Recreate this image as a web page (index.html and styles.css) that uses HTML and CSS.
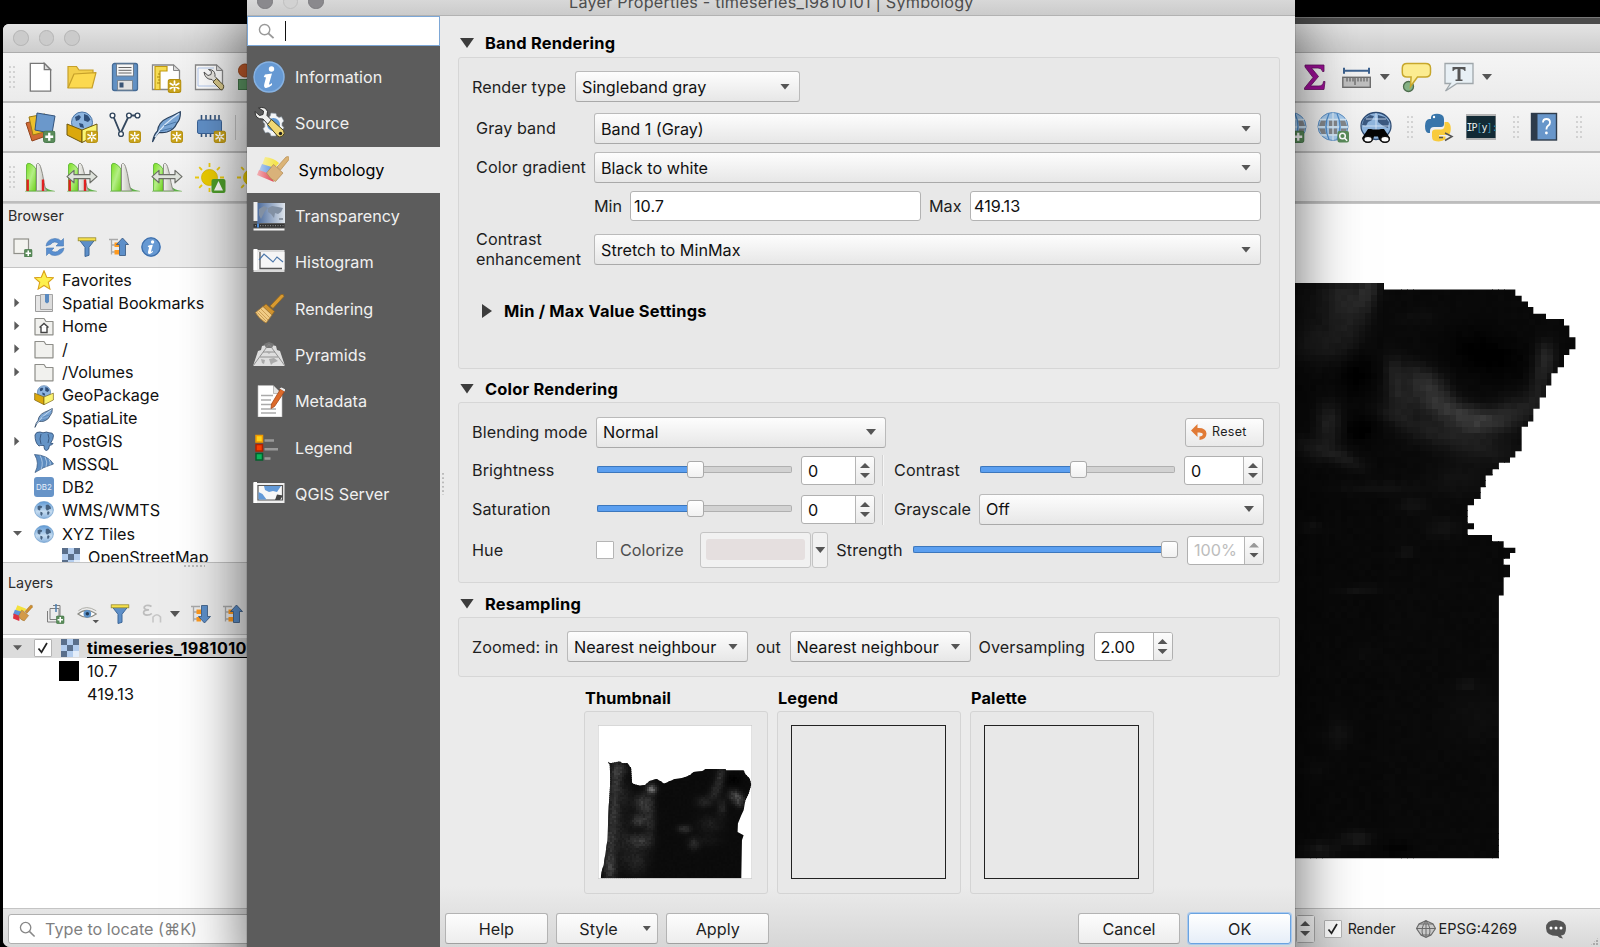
FILE: index.html
```html
<!DOCTYPE html>
<html lang="en">
<head>
<meta charset="utf-8">
<title>Layer Properties</title>
<link rel="stylesheet" href="styles.css">
</head>
<body>
<svg class="defs" width="0" height="0">
  <defs>
    <linearGradient id="gGreen" x1="0" y1="0" x2="1" y2="1"><stop offset="0" stop-color="#7be01e"/><stop offset=".5" stop-color="#b4ee86"/><stop offset="1" stop-color="#6fd018"/></linearGradient>
    <linearGradient id="gGray" x1="0" y1="0" x2="1" y2="0"><stop offset="0" stop-color="#f2f2ee"/><stop offset="1" stop-color="#b9b9b2"/></linearGradient>
    <linearGradient id="gGlobe" x1="0" y1="0" x2="0" y2="1"><stop offset="0" stop-color="#5f9ad6"/><stop offset=".6" stop-color="#c4dbf0"/><stop offset="1" stop-color="#8ab2dc"/></linearGradient>
    <linearGradient id="gYellow" x1="0" y1="0" x2="1" y2="0"><stop offset="0" stop-color="#f7ef9c"/><stop offset="1" stop-color="#f4e13c"/></linearGradient>
    <linearGradient id="gBlue" x1="0" y1="0" x2="1" y2="0"><stop offset="0" stop-color="#b4cdf0"/><stop offset="1" stop-color="#5b93dc"/></linearGradient>
    <linearGradient id="gRed" x1="0" y1="0" x2="1" y2="0"><stop offset="0" stop-color="#f2b0b4"/><stop offset="1" stop-color="#e24553"/></linearGradient>
    <symbol id="badge-new" viewBox="0 0 13 13"><rect x=".5" y=".5" width="12" height="12" rx="2.2" fill="#c9a41c" stroke="#b58f0e"/><path d="M6.5 2v9M2.6 4.2l7.8 4.6M2.6 8.800l7.8-4.600" stroke="#fff" stroke-width="1.6" stroke-linecap="round"/><circle cx="6.5" cy="6.5" r="1" fill="#c9a41c"/></symbol>
    <symbol id="badge-plus" viewBox="0 0 13 13"><rect x=".5" y=".5" width="12" height="12" rx="2.2" fill="#5a8c5a" stroke="#47774a"/><path d="M6.5 2.4v8.2M2.4 6.5h8.2" stroke="#fff" stroke-width="2.4"/></symbol>
    <symbol id="histo" viewBox="0 0 32 32"><path d="M2.500 30V4Q3 1.500 6 2.500 9.500 4 12 8v22z" fill="url(#gGreen)" stroke="#55b030" stroke-width=".8"/><path d="M20 25q3 4 10.500 5H19z" fill="#55b040"/><path d="M12.500 30V3.500q2-3 4 2 2 6 3.500 16 1 6 2.800 8.500z" fill="url(#gGray)" stroke="#8d8d86" stroke-width="1"/><path d="M1 30.300h30" stroke="#8fbf7a" stroke-width=".8"/></symbol>
    <symbol id="redbars" viewBox="0 0 32 32"><path d="M3.700 18.500V30M19 18.500V30" stroke="#e02020" stroke-width="2.400"/></symbol>
    <symbol id="dblarrow" viewBox="0 0 32 32"><path d="M1 15.600l7-6.200v4.200h16V9.400l7 6.200-7 6.200v-4.200H8v4.200z" fill="#dfe3dc" stroke="#6d6f69" stroke-width="1.200" stroke-linejoin="round"/></symbol>
    <symbol id="sun" viewBox="0 0 32 32"><circle cx="15.500" cy="16.500" r="8" fill="#f0cf00" stroke="#dbb900" stroke-width=".8"/><path d="M15.500 2v4M15.500 27v4M1 16.500h4M26 16.500h4M5.200 6.200l2.800 2.800M25.800 6.200L23 9M5.200 26.800L8 24" stroke="#efce10" stroke-width="1.800"/></symbol>
    <symbol id="globe" viewBox="0 0 22 20"><ellipse cx="11" cy="10" rx="10.300" ry="9.300" fill="url(#gGlobe)" stroke="#6b9ccb" stroke-width=".8"/><path d="M4 6l2.500-1 2.500.8-.6 2-1.600.6.300 1.500-1.300.7-1.800-1.300zM7 12l2 .6.600 1.500-1.300 2.500-1.300-1.600zM13 4.500l2.600-.6 2.700 2.400.3 2.500-2 .4-1 1-1.500.4-1.300-2zM14.500 12l2-.6.700 1.600-1.500 2.500-1.200-.6z" fill="#46617f"/></symbol>
    <symbol id="gridglobe" viewBox="0 0 32 32"><ellipse cx="16" cy="15.500" rx="15" ry="14" fill="#a9cdef" stroke="#5c8fc4"/><path d="M4 9.500h5l-1 5.500H2zM12 9.500h8v5.500h-8zM23 9.500h5l2 5.500h-6zM2 17.500h6l1 5.500H4.500zM12 17.500h8v5.500h-8zM24 17.500h6l-2 5.500h-5z" fill="#85888c"/><path d="M16 1.500v28M1 16h30M3 8.500h26M3 24h26" stroke="#d8eaf8" stroke-width="1.300"/><path d="M12 2.500q-6 13 0 26M20 2.500q6 13 0 26" stroke="#4f8dcb" stroke-width="1.300" fill="none"/></symbol>
    <symbol id="box" viewBox="0 0 32 32"><circle cx="16" cy="11.500" r="10.500" fill="#8db5e0" stroke="#4a74a5"/><path d="M9 6l4-2 2 2-2 3-3 1zM18 3l4 1.500 2.500 4-2.500 2.500-4-1.500zM13 12l4 1 1 4-4-1z" fill="#2f4f7a"/><path d="M1 13l15 6v12.500L1 24z" fill="#dba80c" stroke="#6d570c"/><path d="M31 13l-15 6v12.500L31 24z" fill="#fbf573" stroke="#6d570c"/></symbol>
    <symbol id="feather" viewBox="0 0 32 32"><path d="M1.500 31q1-7 5-11 1-9 10-13 6-2.500 12.800-6.200.5 7-3.300 11.200-3 7-10 9-4 1-8 .4Q4 25 1.500 31z" fill="#7aa5d4" stroke="#2c435f" stroke-width="1.200"/><path d="M4 26Q12 13 28 2.500" stroke="#dbe9f8" fill="none" stroke-width="1.200"/><path d="M9 20l12-3M13 15l12-4" stroke="#4b79aa" fill="none"/></symbol>
    <symbol id="folder" viewBox="0 0 20 20"><path d="M1 2.500h9l2 3h7v13.300H1z" fill="#f1f1ee" stroke="#8e8e89" stroke-width="1.200" stroke-linejoin="round"/></symbol>
    <symbol id="funnel" viewBox="0 0 20 20"><path d="M2 2.500h16l-6 7.800v8l-4 1.200v-9.200z" fill="#5d8fc9" stroke="#3d6798"/><rect x="1.200" y=".8" width="17.600" height="3" fill="#f6e04b" stroke="#988c2f" stroke-width=".8"/></symbol>
    <symbol id="treelines" viewBox="0 0 20 20"><path d="M0 2.500h9M2.500 2.500v15M2.500 8h5M2.500 15h5" stroke="#a9a9a9" stroke-width="1.300" fill="none"/><rect x="5.500" y="5.500" width="4.500" height="4.500" fill="#ff9a1e"/><rect x="5.500" y="13" width="4.500" height="4.500" fill="#ff9a1e"/></symbol>
    <symbol id="mosaic" viewBox="0 0 18 18"><path d="M0 0h18v18H0z" fill="#b3cdee"/><path d="M0 0h6v6H0zM12 0h6v6h-6zM6 6h6v6H6zM0 12h6v6H0z" fill="#5a6f8b"/><path d="M12 12h6v6h-6z" fill="#e4eefa"/></symbol>
    <symbol id="info" viewBox="0 0 32 32"><circle cx="16" cy="16" r="15" fill="#6699d3" stroke="#87b2e2" stroke-width="1.500"/><circle cx="18.500" cy="8" r="2.700" fill="#fff"/><path d="M12 13.500q4-.5 7-1l-3 10.500q0 1.500 3-1v2q-4 3.500-6.500 3-2-1-1.200-4l1.700-6.500-2.300-.6z" fill="#fff"/></symbol>
    <symbol id="brush" viewBox="0 0 32 32"><path d="M17 13L28 1.500q3-1 3 2L20 15.500z" fill="#d99a2f" stroke="#8d6423" stroke-width=".8"/><path d="M13 11l8.500 7.500L19 22 10 13.500z" fill="#cf922f" stroke="#8d6423" stroke-width=".8"/><path d="M10 13.500l9 8.500-6 8Q6 26 2.500 19.500z" fill="#f0cb85" stroke="#a97a30" stroke-width=".8"/><path d="M6 18l9 9M8 16l9 9M4.500 19.500l8.500 8.500" stroke="#c3924a" stroke-width=".8"/></symbol>
    <symbol id="gear-tools" viewBox="0 0 32 32"><path d="M18 6l5 .5.600 2.500 2.400 1.400 2.500-.7 2.300 4.300-1.800 2v2.600l1.800 2-2.300 4.300-2.500-.7-2.400 1.400L23 29h-5l-.8-2.500-2.200-1.300-2.600.7-2.400-4.200 1.800-2v-2.800l-1.800-2 2.400-4.300 2.600.7L17.200 9z" fill="#f3f5f7" stroke="#8c98a5" stroke-width=".6"/><circle cx="20.500" cy="17.500" r="6.500" fill="#5f98d4"/><path d="M2 4.500l4.500 4 3.500-1 .5-3.500L5.500 1q7-2 9 3.500l-.5 4 5 5-4 4-5-5.500Q2 12.500 2 4.500z" fill="#f0f0ee" stroke="#333" stroke-width="1"/><path d="M14.500 17.500l4-5 12 11q2 3-1 5.500-3 2-5 0z" fill="#efd774" stroke="#4a431f" stroke-width="1"/><circle cx="27.500" cy="26.500" r="1.700" fill="#222"/></symbol>
    <symbol id="palettebrush" viewBox="0 0 32 32"><path d="M7 2l15 6-7 6-12-2z" fill="#f4e13c"/><path d="M3 9l14 4-5 7-12-3z" fill="#5b93dc"/><path d="M1 15l10 4-1 8-10-4z" fill="#dd3040"/><path d="M19 12l9-10q4-1 3 3L22 15z" fill="#d08f30" stroke="#9a6c28" stroke-width=".7"/><path d="M14 9.500l11 9-7 8.500q-6-1-9-8z" fill="#d39a48" stroke="#96692c" stroke-width=".7"/></symbol>
    <symbol id="palettebrush-soft" viewBox="0 0 32 32"><path d="M8 3q9 1 14 6l-5 6-12-4z" fill="url(#gYellow)"/><path d="M5 10l13 4-5 6-11-3z" fill="url(#gBlue)"/><path d="M2 16l11 4 4 8-17-7z" fill="url(#gRed)"/><path d="M20 13l9-10q4-1.500 3 2.500L23.500 16z" fill="#dbb477" stroke="#b48b50" stroke-width=".7"/><path d="M16.500 10.500l9.500 8.500-7.500 8.500q-5-2-9-8.500z" fill="#d9b27a" stroke="#b08650" stroke-width=".7"/></symbol>
  </defs>
</svg>

<div class="back-strip"></div>

<main class="main-window">
  <header class="main-title"><i></i><i></i><i></i></header>

  <div class="toolbar">
    <span class="grip"></span>
    <div class="tools">
      <svg viewBox="0 0 32 32"><path d="M6.300 2.400h14l6.300 6.300v21.500H6.300z" fill="#fff" stroke="#777" stroke-width="1.300"/><path d="M20.300 2.400v6.300h6.300z" fill="#ddd" stroke="#777" stroke-width="1.300"/></svg>
      <svg viewBox="0 0 32 32"><path d="M2 27V5.500h8.500l2.500 3.500h14v5" fill="#f3cf4b" stroke="#c6a02a" stroke-width="1.200"/><path d="M2 27l6-14 22-1.300L26 27z" fill="#fcd94f" stroke="#c6a02a" stroke-width="1.200" stroke-linejoin="round"/></svg>
      <svg viewBox="0 0 32 32"><rect x="3.500" y="2.500" width="25" height="27" rx="2" fill="#6291c4" stroke="#466c96" stroke-width="1.300"/><rect x="7.500" y="3" width="17" height="12" fill="#f6f6f6" stroke="#6d7c8c"/><path d="M9.500 6.500h13M9.500 9.300h13M9.500 12h13" stroke="#666" stroke-width="1"/><rect x="8.500" y="19.500" width="15" height="9.500" fill="#e2e2e2" stroke="#7c8894"/><rect x="10.500" y="21.500" width="4" height="5" fill="#3a5576"/></svg>
      <svg viewBox="0 0 32 32"><path d="M1.500 4h21l6 5.500v19h-27z" fill="#fff" stroke="#888" stroke-width="1.300"/><path d="M22.500 4v5.500h6z" fill="#ddd" stroke="#888"/><path d="M4 5.500h12V10H9v18.500H4z" fill="#f6dc52" stroke="#c29a10" stroke-width="1.200"/><path d="M9 13H7M9 16H6M9 19H7M9 22H6" stroke="#a8840c"/><use href="#badge-new" x="16.500" y="18" width="14" height="14"/></svg>
      <svg viewBox="0 0 32 32"><path d="M1.500 4h21l6 5.500v19h-27z" fill="#fff" stroke="#888" stroke-width="1.300"/><path d="M22.500 4v5.500h6z" fill="#ddd" stroke="#888"/><path d="M4 7h16M4 7v18h20" stroke="#b6cbef" fill="none"/><path d="M10 11l4 3.500 3-1 .5-3-3-2q6 0 6.500 5v2l4 4-3 3-4-4q-7 0-8-7.500z" fill="#eceae4" stroke="#555"/><path d="M19 21l3.500-3.500 7 6.500q1 4-2.500 5z" fill="#d9c98b" stroke="#5d5433"/></svg>
      <svg viewBox="0 0 32 32"><circle cx="9" cy="9.500" r="6.500" fill="#c25c2c" stroke="#9c4418"/><rect x="2.500" y="18.500" width="14" height="10" fill="#5f9a66" stroke="#46784c"/></svg>
    </div>
    <div class="tools right r1">
      <svg viewBox="0 0 32 32"><path d="M6 4h19v6.500h-1.500Q23 7 19 7h-6.500l7 8.500-8 9.500H20q4 0 4.500-4.500H26L25 28.500H5.500V27l8.500-10.500L6 6z" fill="#9c0f96" stroke="#62105f" stroke-width=".8"/></svg>
      <svg viewBox="0 0 32 32"><path d="M3 9.800h25M3 6.800v6M28 6.800v6" stroke="#3d628f" stroke-width="2"/><rect x="1.800" y="16.300" width="27.500" height="10" fill="#bfbfbf" stroke="#6e6e6e" stroke-width="1.400"/><path d="M6 17v3.500M9 17v3.500M12 17v3.500M14 17v7M17 17v3.500M20 17v3.500M23 17v3.500M26 17v3.500" stroke="#505050"/></svg>
      <b class="arrow"></b>
      <svg viewBox="0 0 32 32"><circle cx="8.500" cy="25.500" r="5" fill="#84b184" stroke="#4e6d4e" stroke-width="1.300"/><path d="M7 2.500h18.500Q30.500 2.500 30.500 7v4.500q0 4.500-5 4.500h-8l-7 9.500.6-9.500H7q-4.700 0-4.700-4.500V7Q2.300 2.500 7 2.500z" fill="#fcec90" stroke="#c7a72c" stroke-width="1.500"/></svg>
      <svg viewBox="0 0 32 32"><path d="M2 2.500h28v20H14L2.500 30l5-7.500H2z" fill="#e8f0f5" stroke="#9fa6aa" stroke-width="1.300"/><path d="M9.500 6h13v4h-1q-.5-2-4-2v10.500h2V20h-7v-1.500h2V8q-3.500 0-4 2h-1z" fill="#555"/></svg>
      <b class="arrow"></b>
    </div>
  </div>

  <div class="toolbar">
    <span class="grip"></span>
    <div class="tools">
      <svg viewBox="0 0 32 32"><path d="M2 12l14-4 6 17-14 5z" fill="#cf6a35" stroke="#93431c"/><path d="M5 6l16-3 3 17-15 4z" fill="#edc02c" stroke="#9a7a14"/><path d="M13 2l18 3-3 17.500-17-3.500z" fill="#6b98cb" stroke="#34547c"/><use href="#badge-plus" x="19" y="19.500" width="12.500" height="12.500"/></svg>
      <svg viewBox="0 0 32 32"><use href="#box"/><use href="#badge-new" x="19.500" y="19.500" width="12.500" height="12.500"/></svg>
      <svg viewBox="0 0 32 32"><path d="M4 4.500l7.500 18L20 4.500h8" stroke="#33475e" stroke-width="1.800" fill="none"/><g fill="#fff" stroke="#33475e" stroke-width="1.400"><circle cx="3.500" cy="4.500" r="2.400"/><circle cx="12" cy="23" r="2.400"/><circle cx="20" cy="4.500" r="2.400"/><circle cx="28.500" cy="4.500" r="2.400"/></g><use href="#badge-new" x="19.500" y="19.500" width="12.500" height="12.500"/></svg>
      <svg viewBox="0 0 32 32"><use href="#feather"/><use href="#badge-new" x="19.500" y="19.500" width="12.500" height="12.500"/></svg>
      <svg viewBox="0 0 32 32"><path d="M7.500 4v22M12 4v22M16.500 4v22M21 4v22M25 4v22" stroke="#34547c" stroke-width="1.600"/><rect x="3.500" y="9" width="24" height="13.500" rx="1.500" fill="#6291c9" stroke="#3b6397"/><use href="#badge-new" x="19.500" y="19.500" width="12.500" height="12.500"/></svg>
      <span class="vsep"></span>
    </div>
    <div class="tools right r2">
      <svg viewBox="0 0 32 32"><use href="#gridglobe"/><use href="#badge-plus" x="17" y="19.500" width="12.500" height="12.500"/></svg>
      <svg viewBox="0 0 32 32"><use href="#gridglobe"/><rect x="20.500" y="20" width="11.500" height="11.500" rx="2" fill="#5a8c5a"/><circle cx="25.500" cy="25" r="2.800" fill="none" stroke="#fff" stroke-width="1.500"/><path d="M27.700 27.200l2.500 2.500" stroke="#fff" stroke-width="1.600"/></svg>
      <svg viewBox="0 0 32 32"><ellipse cx="16" cy="15" rx="15" ry="13.500" fill="#8fb5dd" stroke="#2f4c73" stroke-width="1.300"/><path d="M4 8l6-4 4 1-2 4-4 2-2 4-4-1zM18 4l7 2 4 5-1 6-5-2-5-4z" fill="#3b5980"/><path d="M3 15h26M16 2v20M6 8h20" stroke="#dceafa" stroke-width=".8"/><path d="M13 18.500h6l2-.5h3l6 9q-1 5-6 4.500-5-.5-6-6h-4q-1 5.500-6 6-5 .5-6-4.500l6-9h3z" fill="#050505"/><ellipse cx="8" cy="28.300" rx="4.300" ry="3" fill="#fff" stroke="#111" stroke-width="1.500"/><ellipse cx="25" cy="28.300" rx="4.300" ry="3" fill="#fff" stroke="#111" stroke-width="1.500"/></svg>
      <span class="grip"></span>
      <svg viewBox="0 0 32 32"><path d="M10 4q5-2.500 10 0 2 1.500 2 4v5q0 3-3 3h-7q-4 0-4 4v2H6q-3-1-3-7t4-7h8.500V8H9V6z" fill="#3875aa"/><circle cx="12" cy="6" r="1.200" fill="#fff"/><path d="M22.500 11H26q3 2 2.800 7 0 5-2.800 6h-9v1.500h6.500V28q-4.500 4-12 1.500-1.500-1-1.500-4v-4q0-3 3.500-3h5.500q3.500 0 3.500-4z" fill="#f8cb3c"/><path d="M17 26.500h4M23 22l7 3.500-7 4" stroke="#555" stroke-width="1.500" fill="none"/></svg>
      <svg viewBox="0 0 32 32"><path d="M1 3h30v26H1z" fill="#b4b4b4"/><path d="M1.500 5h29v22h-29z" fill="#122a35"/><text class="ipy" x="1.500" y="19.500" fill="#e4eaea">IP<tspan fill="#3492b4">[</tspan>y<tspan fill="#3492b4">]:</tspan></text></svg>
      <span class="grip"></span>
      <svg viewBox="0 0 32 32"><rect x="3.500" y="2.500" width="25" height="26.500" fill="#6896ca" stroke="#2f3c4c" stroke-width="1.400"/><path d="M3.500 2.500h6V29h-6z" fill="#2d3b4b"/><path d="M15 11.500q0-3.500 3.500-3.500t3.500 3.500q0 2-2 3.300-1.600 1.200-1.600 3.700" fill="none" stroke="#fff" stroke-width="1.800"/><circle cx="18.400" cy="22" r="1.400" fill="#fff"/></svg>
      <span class="grip"></span>
    </div>
  </div>

  <div class="toolbar">
    <span class="grip"></span>
    <div class="tools">
      <svg viewBox="0 0 32 32"><use href="#histo"/><use href="#redbars"/></svg>
      <svg viewBox="0 0 32 32"><use href="#histo"/><use href="#redbars"/><use href="#dblarrow"/></svg>
      <svg viewBox="0 0 32 32"><use href="#histo"/></svg>
      <svg viewBox="0 0 32 32"><use href="#histo"/><use href="#dblarrow"/></svg>
      <svg viewBox="0 0 32 32"><use href="#sun"/><rect x="17.500" y="18" width="14" height="14" rx="2" fill="#4fa02c"/><path d="M24.500 20l4.500 9.500h-9z" fill="#fff"/></svg>
      <svg viewBox="0 0 32 32"><use href="#sun"/></svg>
    </div>
  </div>

  <div class="workspace">
    <aside class="docks">
      <h2 class="dock-title">Browser</h2>
      <div class="dock-tools">
        <svg viewBox="0 0 20 20"><rect x="1" y="2" width="14.500" height="14.500" fill="#f3f3ef" stroke="#8f8f89" stroke-width="1.200"/><use href="#badge-plus" x="11" y="12" width="8.500" height="8.500"/></svg>
        <svg viewBox="0 0 20 20"><path d="M1 9Q2 2 10 1.500q4 0 6 2.500L18.500 1.500V9H11l2.500-2.500Q9 3 5.500 7.500L1 9zM19 11q-1 7-9 7.500-4 0-6-2.500L1.500 18.500V11H9l-2.500 2.500q4.500 3.500 8-1z" fill="#5a8fd0" stroke="#4678b4" stroke-width=".6"/></svg>
        <svg viewBox="0 0 20 20"><use href="#funnel"/></svg>
        <svg viewBox="0 0 20 20"><use href="#treelines"/><path d="M13.500 1l6 6.500h-3v11h-6v-11h-3z" fill="#5d8fc9" stroke="#34547c" stroke-width=".8"/></svg>
        <svg viewBox="0 0 32 32"><use href="#info"/><circle cx="16" cy="16" r="14.500" fill="none" stroke="#3f6ea8" stroke-width="2"/></svg>
      </div>
      <ul class="tree browser">
        <li><span class="tw"></span><svg viewBox="0 0 20 20"><path d="M10 .8l2.700 6.400 6.800.6-5.200 4.500 1.600 6.800L10 15.500l-5.900 3.600 1.600-6.800L.5 7.800l6.800-.6z" fill="#fdf04c" stroke="#d9a11a" stroke-width="1.100"/></svg>Favorites</li>
        <li><span class="tw closed"></span><svg viewBox="0 0 20 20"><path d="M1.500 2.500h5V14h12v4.500h-17z" fill="#e6e6e6" stroke="#9c9c9c"/><path d="M6.500 1.500h12v15h-12z" fill="#dcdcdc" stroke="#a5a5a5"/><path d="M11 1h4v8l-2 1.500L11 9z" fill="#5a8ac0"/></svg>Spatial Bookmarks</li>
        <li><span class="tw closed"></span><svg viewBox="0 0 20 20"><use href="#folder"/><path d="M5.500 11.500L10 7.500l4.500 4M7 11v5.500h6V11" fill="#fff" stroke="#444" stroke-width="1.400"/></svg>Home</li>
        <li><span class="tw closed"></span><svg viewBox="0 0 20 20"><use href="#folder"/></svg>/</li>
        <li><span class="tw closed"></span><svg viewBox="0 0 20 20"><use href="#folder"/></svg>/Volumes</li>
        <li><span class="tw"></span><svg viewBox="0 0 32 32"><use href="#box"/></svg>GeoPackage</li>
        <li><span class="tw"></span><svg viewBox="0 0 32 32"><use href="#feather"/></svg>SpatiaLite</li>
        <li><span class="tw closed"></span><svg viewBox="0 0 20 20"><path d="M1 4q1-3.500 5-3l3 .8q4-1.500 6 0 4-.5 4.500 2.500 0 4-3 8l2.500.2q-1 2-3.500 1.800-.5 5-3 5.200-2.500 0-2.500-5-4-.5-5 .5Q1 12 1 4z" fill="#6594c6" stroke="#34547c" stroke-width=".9"/><path d="M7 3q-2 5 0 10M14 3q2 4 0 9" stroke="#34547c" fill="none" stroke-width=".9"/></svg>PostGIS</li>
        <li><span class="tw"></span><svg viewBox="0 0 20 20"><path d="M.5.500Q14 1 19.500 10 9 13 1 18.500 6 9 .5.500z" fill="#5d8cc0" stroke="#34547c" stroke-width=".7"/><path d="M6 1.500q4 7 1 14M11 3q3 5 1 10M15 5q2 4 1 6.500" stroke="#c9dcf0" fill="none" stroke-width=".7"/></svg>MSSQL</li>
        <li><span class="tw"></span><span class="db2">DB2</span>DB2</li>
        <li><span class="tw"></span><svg viewBox="0 0 22 20"><use href="#globe"/></svg>WMS/WMTS</li>
        <li><span class="tw open"></span><svg viewBox="0 0 22 20"><use href="#globe"/></svg>XYZ Tiles</li>
        <li class="child"><svg class="tile" viewBox="0 0 18 18"><use href="#mosaic"/></svg>OpenStreetMap</li>
      </ul>
      <div class="hgrip"></div>
      <h2 class="dock-title layers-title">Layers</h2>
      <div class="dock-tools layer-tools">
        <svg viewBox="0 0 32 32"><use href="#palettebrush"/></svg>
        <svg viewBox="0 0 20 20"><path d="M5 4.500h9v11H5zM2.500 7v11h9M8 1.500h7v11" fill="#eee" fill-opacity=".4" stroke="#7d7d7d"/><path d="M11 0v8" stroke="#4d7fb0" stroke-width="1.500"/><use href="#badge-plus" x="11" y="11.500" width="8.500" height="8.500"/></svg>
        <svg class="eye" viewBox="0 0 24 20"><path d="M1 10Q10 2 21 10 11 17.500 1 10z" fill="#fff" stroke="#8c8c86" stroke-width="1.200"/><path d="M1.500 6.500Q10-.5 21 6.500" fill="none" stroke="#a8a8a2"/><circle cx="11.300" cy="9.800" r="4.200" fill="#5d92c8"/><circle cx="11.300" cy="9.800" r="1.900" fill="#223a55"/><path d="M17 16.500h7l-3.500 3.500z" fill="#555"/></svg>
        <svg viewBox="0 0 20 20"><use href="#funnel"/></svg>
        <svg viewBox="0 0 20 20"><path d="M9.500 2.500Q7 .8 4.200 1.500 1.500 2.500 2.500 4.500 3.500 6 7 5.800 2 5.600 1.600 8.300 1.500 11 5 11.200q3 0 4.800-1.700" fill="none" stroke="#bdbdbd" stroke-width="1.700"/><path d="M11 18v-5q4-4.500 7.500 0v5M11 14.500v4M18.500 14.500v4" fill="none" stroke="#c6c6c6" stroke-width="1.600"/></svg>
        <b class="arrow"></b>
        <svg viewBox="0 0 20 20"><use href="#treelines"/><path d="M13.500 19l6-6.500h-3v-11h-6v11h-3z" fill="#5d8fc9" stroke="#34547c" stroke-width=".8"/></svg>
        <svg viewBox="0 0 20 20"><use href="#treelines"/><path d="M13.500 1l6 6.500h-3v11h-6v-11h-3z" fill="#5d8fc9" stroke="#34547c" stroke-width=".8"/></svg>
      </div>
      <ul class="tree layers">
        <li class="selected"><span class="tw open"></span><span class="check small"><svg viewBox="0 0 16 16"><path d="M3.500 8.500l3 3.800L12 3" fill="none" stroke="#222" stroke-width="1.700"/></svg></span><svg class="tile" viewBox="0 0 18 18"><use href="#mosaic"/></svg><u>timeseries_19810101</u></li>
        <li class="legend-row"><span class="swatch"></span>10.7</li>
        <li class="legend-row"><span class="swatch none"></span>419.13</li>
      </ul>
      <div class="locate"><div class="locate-box"><svg viewBox="0 0 18 18"><circle cx="7" cy="7" r="5.500" fill="none" stroke="#888" stroke-width="1.400"/><path d="M11 11l5.500 5.500" stroke="#888" stroke-width="1.600"/></svg>Type to locate (⌘K)</div></div>
    </aside>

    <section class="map-side">
      <div class="canvas">
        <svg class="raster" viewBox="0 52 960 1314" preserveAspectRatio="none">
          <clipPath id="land"><path d="M0 52H312V67H706V81H725V94H744V107H760V122H798V134H852V149H868V176H887V203H868V216H852V244H833V258H814V286H798V313H779V339H760V368H744V380H725V436H706V450H690V462H656V477H637V491H617V518H602V544H582V559H563V600H582V614H563V627H636V641H671V656H706V668H690V681H671V695H690V723H671V765H656V1365H0Z"/></clipPath>
          <g id="map-cells" clip-path="url(#land)"></g>
        </svg>
      </div>
      <footer class="status">
        <span class="spin-only"><span class="spin-arrows"><i class="up"></i><i class="down"></i></span></span>
        <span class="check"><svg viewBox="0 0 16 16"><path d="M3.500 8.500l3 3.800L12 3" fill="none" stroke="#222" stroke-width="1.700"/></svg></span>
        <span class="render-label">Render</span>
        <svg class="crs" viewBox="0 0 20 18"><path d="M10 .7L17 4l2.500 4.500L15 15l-5 2.300L5 15 .5 8.500 3 4z" fill="#c9c9c9" stroke="#6a6a6a" stroke-width="1.200"/><path d="M10 .7v16.600M.5 8.500h19M3 4h14M5 15h10M10 .7Q4 8 7 16M10 .7q6 7.300 3 15.300" stroke="#6a6a6a" fill="none"/></svg>
        <span>EPSG:4269</span>
        <svg class="msg" viewBox="0 0 22 20"><path d="M11 1q10 .5 10 8t-5 7.500l2 3q-4-.5-5.500-2.500Q1 17 1 9t10-8z" fill="#555"/><g fill="#fff"><circle cx="6" cy="9" r="1.500"/><circle cx="11" cy="9" r="1.500"/><circle cx="16" cy="9" r="1.500"/></g></svg>
        <span class="corner"></span>
      </footer>
    </section>
  </div>
</main>

<section class="dialog">
  <header class="dialog-title"><i></i><i class="mid"></i><i></i><span>Layer Properties - timeseries_19810101 | Symbology</span></header>
  <div class="dialog-body">
    <nav class="sidebar">
      <div class="search"><svg viewBox="0 0 18 18"><circle cx="7" cy="7" r="5.500" fill="none" stroke="#999" stroke-width="1.500"/><path d="M11 11l5.500 5" stroke="#999" stroke-width="2"/></svg><span class="caret"></span></div>
      <a><svg viewBox="0 0 32 32"><use href="#info"/></svg>Information</a>
      <a><svg viewBox="0 0 32 32"><use href="#gear-tools"/></svg>Source</a>
      <a class="active"><svg viewBox="0 0 32 32"><use href="#palettebrush-soft"/></svg>Symbology</a>
      <a><svg viewBox="0 0 32 32"><defs><linearGradient id="gMap"><stop offset="0" stop-color="#4a6a9c"/><stop offset="1" stop-color="#dfe5ec"/></linearGradient></defs><rect x="4" y="3" width="28" height="20" fill="url(#gMap)"/><path d="M6 9l5-3 4 2-3 3-2 4-2 4-2-4zM15 8l4-2 6 1 5 1-2 4-3 2-3-1-1 5-3-4-3-2z" fill="#8290a3"/><path d="M26 18h4v2h-4z" fill="#8c96a2"/><path d="M.5 2h4v19h-4z" fill="#eee"/><path d="M.5 24h31v3.500H.5z" fill="#333"/><path d="M2 25.700h29" stroke="#999" stroke-dasharray="1 1.500"/><path d="M.5 28.500h31v2H.5z" fill="#f3f3f3"/><path d="M4 23.500h2v4H4z" fill="#4b8bd8"/></svg>Transparency</a>
      <a><svg viewBox="0 0 32 32"><path d="M.5 4h31v22H.5z" fill="#d9d9d9"/><path d="M5 6h26.500v17.500H5z" fill="#f5f5f5"/><path d="M.5 3h4v21h-4z" fill="#fff"/><path d="M7 6v16.500h22" stroke="#555" fill="none" stroke-width="1.300"/><path d="M6 14l5-6 9 8 4-5 6 5" stroke="#4e78aa" fill="none" stroke-width="1.200"/></svg>Histogram</a>
      <a><svg viewBox="0 0 32 32"><use href="#brush"/></svg>Rendering</a>
      <a><svg viewBox="0 0 32 32"><path d="M5 12l3-1 1-4 4-1 1-2h4l1 2 4 1 1 4 3 1 5 15H0z" fill="#dedede"/><path d="M11 5l5-2 5 2-2 4h-6z" fill="#777"/><path d="M16 5L0 27M16 5l16 22M7 18h18M10 13h12" stroke="#888" fill="none" stroke-width=".9"/><path d="M8 20l4 1-1 4-2-1zM16 20l5-1 4 3-5 2-2 2zM13 12l5 1-2 2z" fill="#aaa"/></svg>Pyramids</a>
      <a><svg viewBox="0 0 32 32"><path d="M5 .5h15l9 9V32H5z" fill="#fff" stroke="#bbb" stroke-width=".6"/><path d="M20.500.5v8h8z" fill="#e4e4e4" stroke="#999" stroke-width=".6"/><path d="M8 10.500h12M8 15h10M8 19.500h12M8 24h15M8 28h15" stroke="#aaa" stroke-width="1.500"/><path d="M27.500 4l4 2.500-10 15-3.500 2 .5-4.500z" fill="#dd6a2a" stroke="#a4491a" stroke-width=".8"/><path d="M26.500 3.500l5 3 1-2-4-2z" fill="#eee"/></svg>Metadata</a>
      <a><svg viewBox="0 0 32 32"><rect x="3" y="3.500" width="6.500" height="6.500" fill="#ffd21a" stroke="#f09a00" stroke-width="1.500"/><rect x="3" y="12.500" width="6.500" height="6.500" fill="#f53d00" stroke="#b02000" stroke-width="1.500"/><rect x="3" y="21.500" width="6.500" height="6.500" fill="#0bb45a" stroke="#045f2c" stroke-width="1.500"/><path d="M11.500 8.500h9.500M11.500 17.300H25M11.500 26.500h6" stroke="#999" stroke-width="2.500"/></svg>Legend</a>
      <a><svg viewBox="0 0 32 32"><path d="M.5 5h31v20H.5z" fill="#eee"/><path d="M5 7.500h24.500V22H5z" fill="#f7f7f7" stroke="#555" stroke-width="1.200"/><path d="M11 8h17l-4 6-4-1-4 1-4-2zM5.500 14l4 2 4 5.500h-8z" fill="#639ad8"/><path d="M.5 4h3.500v21H.5z" fill="#fff"/><path d="M22 22l2-5.500 6 1-3 4.500z" fill="#444"/></svg>QGIS Server</a>
    </nav>
    <div class="split"></div>

    <div class="panel">
      <h3 class="head"><b class="tri"></b>Band Rendering</h3>
      <div class="group band">
        <div class="row r-type"><label>Render type</label><span class="combo">Singleband gray<b class="arrow"></b></span></div>
        <div class="row inner mt11"><label>Gray band</label><span class="combo grow">Band 1 (Gray)<b class="arrow"></b></span></div>
        <div class="row inner mt8"><label>Color gradient</label><span class="combo grow">Black to white<b class="arrow"></b></span></div>
        <div class="row inner minmax"><label></label><span class="lbl-min">Min</span><span class="field">10.7</span><span class="lbl-max">Max</span><span class="field">419.13</span></div>
        <div class="row inner mt12"><label class="two">Contrast<br>enhancement</label><span class="combo grow">Stretch to MinMax<b class="arrow"></b></span></div>
        <h3 class="head sub"><b class="tri right"></b>Min / Max Value Settings</h3>
      </div>

      <h3 class="head second"><b class="tri"></b>Color Rendering</h3>
      <div class="group color">
        <div class="row"><label>Blending mode</label><span class="combo blend">Normal<b class="arrow"></b></span><span class="reset"><svg viewBox="0 0 16 16"><path d="M0 6.500L6.500 0v4Q15 3.500 15.500 9.500q0 5.500-7 6.500v-3.500q3.500-.5 3.300-2.500-.3-2-5.300-1.500v4.500z" fill="#e17a35"/></svg>Reset</span></div>
        <div class="row r-bright"><label>Brightness</label><span class="slider half"><i class="fill"></i><i class="knob"></i><i class="rest"></i></span><span class="spin w74"><em>0</em><span class="spin-arrows"><i class="up"></i><i class="down"></i></span></span><span class="vline"></span><label class="mid-label">Contrast</label><span class="slider half"><i class="fill"></i><i class="knob"></i><i class="rest"></i></span><span class="spin w79"><em>0</em><span class="spin-arrows"><i class="up"></i><i class="down"></i></span></span></div>
        <div class="row r-sat"><label>Saturation</label><span class="slider half"><i class="fill"></i><i class="knob"></i><i class="rest"></i></span><span class="spin w74"><em>0</em><span class="spin-arrows"><i class="up"></i><i class="down"></i></span></span><span class="vline"></span><label class="mid-label gs">Grayscale</label><span class="combo gray">Off<b class="arrow"></b></span></div>
        <div class="row r-hue"><label>Hue</label><span class="check empty"></span><span class="colorize">Colorize</span><span class="swbtn"><i></i></span><span class="swdrop"><b class="arrow"></b></span><span class="strength">Strength</span><span class="slider full"><i class="fill"></i><i class="knob"></i></span><span class="spin w77 off"><em>100%</em><span class="spin-arrows"><i class="up"></i><i class="down"></i></span></span></div>
      </div>

      <h3 class="head third"><b class="tri"></b>Resampling</h3>
      <div class="group resample">
        <div class="row"><span class="z-in">Zoomed: in</span><span class="combo near">Nearest neighbour<b class="arrow"></b></span><span class="z-out">out</span><span class="combo near">Nearest neighbour<b class="arrow"></b></span><span class="z-over">Oversampling</span><span class="spin w79"><em>2.00</em><span class="spin-arrows"><i class="up"></i><i class="down"></i></span></span></div>
      </div>

      <div class="previews">
        <div class="preview"><h3>Thumbnail</h3><div class="frame">
          <svg class="thumb" viewBox="475 136 460 459">
            <clipPath id="mini"><path d="M505 245L512 250 540 244 548 250 563 250 574 265 577 310 600 317 615 315 630 302 650 297 665 305 672 311 690 303 705 297 730 293 750 285 760 276 785 274 797 267H855L858 271H910L915 282 928 295 933 313 925 340 915 362 910 390 903 405 893 430 892 455 910 465 905 480 903 593H483L485 575 492 553 497 520 503 480 505 430 507 380 512 300 510 255Z"/></clipPath>
            <rect x="475.500" y="136.500" width="459" height="458" fill="#fff" stroke="#c8c8c8" stroke-width="2"/>
            <g id="thumb-cells" clip-path="url(#mini)"></g>
          </svg></div></div>
        <div class="preview"><h3>Legend</h3><div class="frame"><div class="blank"></div></div></div>
        <div class="preview"><h3>Palette</h3><div class="frame"><div class="blank"></div></div></div>
      </div>

      <div class="buttons">
        <span class="btn">Help</span><span class="btn style">Style<b class="arrow"></b></span><span class="btn">Apply</span>
        <span class="btn cancel">Cancel</span><span class="btn ok">OK</span>
      </div>
    </div>
  </div>
</section>
<script src="raster.js"></script>
</body>
</html>
```
FILE: raster.js
```javascript
// Single-band raster painted as grey cells: base level plus elliptical highlights.
// Each highlight is [cx, cy, rx, ry, rotation in degrees, level].
const mapSpots = [
  [265, 70, 30, 48, 20, 46], [190, 75, 60, 50, 0, 34], [200, 140, 60, 60, 20, 30], [120, 195, 80, 40, 0, 26],
  [145, 370, 38, 45, 0, 40], [110, 430, 75, 26, 10, 30], [200, 455, 60, 16, 20, 24], [90, 120, 60, 70, 0, 14],
  [345, 270, 26, 50, -15, 34], [410, 270, 60, 34, 20, 34], [465, 300, 60, 36, 30, 44], [530, 345, 90, 28, 12, 52],
  [600, 368, 85, 28, 0, 44], [700, 345, 80, 34, -14, 40], [780, 270, 28, 60, 18, 34], [797, 220, 32, 36, 0, 30],
  [380, 320, 70, 30, 10, 26], [350, 355, 60, 20, 15, 24], [460, 390, 100, 34, 10, 26], [600, 425, 120, 36, 10, 26],
  [540, 500, 90, 40, 0, 14], [620, 215, 120, 50, 10, -16], [230, 260, 50, 50, 0, -14], [240, 385, 50, 30, 0, -14],
  [420, 130, 60, 20, 0, 8], [300, 520, 120, 12, 0, 14], [400, 560, 40, 18, 0, 16], [490, 610, 50, 22, 0, 16],
  [380, 667, 24, 9, 0, 22], [240, 752, 60, 9, 0, 17], [95, 610, 32, 12, 0, 17], [260, 900, 40, 20, 0, 6],
  [560, 968, 30, 10, 0, 19], [590, 1040, 90, 60, 0, 8], [175, 1080, 35, 30, 0, 15], [230, 1320, 45, 18, 0, 26],
  [120, 1345, 50, 18, 0, 26], [350, 1345, 40, 18, 0, -12], [110, 1160, 40, 20, 0, 8]
];
const thumbSpots = [
  [530, 300, 18, 60, 0, 66], [522, 400, 18, 60, 0, 56], [512, 560, 18, 40, 0, 80], [545, 270, 20, 20, 0, 40],
  [512, 480, 18, 50, 0, 56], [560, 350, 20, 40, 0, 24], [634, 328, 14, 12, 20, 130], [605, 370, 20, 26, 0, 66],
  [598, 420, 20, 18, 0, 80], [630, 400, 16, 80, 0, 44], [600, 480, 30, 22, 0, 66], [590, 540, 30, 40, 0, 36],
  [840, 290, 14, 28, 12, 52], [825, 335, 16, 26, 25, 46], [790, 365, 24, 16, 0, 34], [845, 380, 14, 24, 0, 40],
  [885, 350, 20, 16, 35, 90], [900, 365, 14, 16, 0, 50], [732, 445, 20, 12, 0, 56], [760, 490, 16, 18, 0, 42],
  [810, 430, 36, 26, 0, 28], [880, 300, 26, 18, 0, -14], [800, 480, 40, 18, 0, 14], [550, 480, 26, 80, 0, 26]
];

function hash(a, b) {
  const s = Math.sin(a * 127.1 + b * 311.7) * 43758.5453;
  return s - Math.floor(s);
}

function paint(id, spots, x0, y0, x1, y1, cw, ch, base, grain) {
  const group = document.getElementById(id);
  const ns = "http://www.w3.org/2000/svg";
  for (let r = 0, y = y0; y < y1; r++, y += ch) {
    for (let c = 0, x = x0; x < x1; c++, x += cw) {
      let v = 0;
      for (const [cx, cy, rx, ry, deg, level] of spots) {
        const t = deg * Math.PI / 180, dx = x + cw / 2 - cx, dy = y + ch / 2 - cy;
        const u = (dx * Math.cos(t) + dy * Math.sin(t)) / rx;
        const w = (dy * Math.cos(t) - dx * Math.sin(t)) / ry;
        v += level * Math.exp(-(u * u + w * w)) * 0.62;
      }
      v *= 1 - grain / 2 + grain * hash(c, r);
      v = Math.max(0, Math.round(base + v + 2 * hash(r, c)));
      const cell = document.createElementNS(ns, "rect");
      cell.setAttribute("x", x);
      cell.setAttribute("y", y);
      cell.setAttribute("width", cw + 0.5);
      cell.setAttribute("height", ch + 0.5);
      cell.setAttribute("fill", `rgb(${v},${v},${v})`);
      group.appendChild(cell);
    }
  }
}

paint("map-cells", mapSpots, 0, 52, 890, 1366, 18.2, 13.65, 8, 0.2);
paint("thumb-cells", thumbSpots, 476, 238, 936, 595, 6, 6, 10, 0.5);
```
FILE: styles.css
```css
* { box-sizing: border-box; }
body {
  margin: 0; width: 1600px; height: 947px; overflow: hidden; position: relative;
  background: #000; color: #1e1e1e;
  font: 16.2px/20px Inter, "Liberation Sans", sans-serif;
}
.defs { position: absolute; }
h2, h3, ul { margin: 0; padding: 0; }
i, em { font-style: normal; }
svg { display: block; flex: none; }

.back-strip { position: absolute; left: 1290px; top: 17px; width: 310px; height: 10px; background: #4c4c4c; border-top: 1px solid #777; }

/* main window */
.main-window {
  position: absolute; left: 3px; top: 24px; width: 1597px; height: 923px;
  display: flex; flex-direction: column; overflow: hidden;
  background: #ececec; border-radius: 6px 0 0 7px;
}
.main-title { height: 29px; flex: none; display: flex; align-items: center; gap: 10px; padding-left: 10px; background: linear-gradient(#e4e4e4, #cdcdcd); border-bottom: 1px solid #adadad; }
.main-title i { width: 15.6px; height: 15.6px; border-radius: 50%; background: #cbcbcb; border: 1px solid #b4b4b4; }
.toolbar { height: 50px; flex: none; display: flex; align-items: center; background: linear-gradient(#f5f5f5, #ebebeb); border-bottom: 2px solid #bdbdbd; padding-left: 6px; }
.grip { width: 7px; height: 23px; flex: none; background: radial-gradient(circle at 1px 1px, #c8c8c8 .6px, transparent 1px) 0 0 / 4px 5px; }
.tools { display: flex; align-items: center; gap: 10.4px; margin-left: 8px; }
.tools svg { width: 32px; height: 32px; }
.vsep { width: 1px; height: 25px; background: #c6c6c6; margin-left: -1px; }
.right { margin-left: auto; }
.r1 { padding-right: 108px; }
.r1 .arrow { margin: 0 0 0 -4px; }
.r1 .arrow:last-child { margin-left: -3px; }
.r2 { padding-right: 18px; }
.r2 .grip { margin: 0 -2px 0 5px; }
.r2 .grip:last-child { margin: 0 0 0 6px; width: 6px; }
.r2 .grip:nth-last-child(3) { margin: 0 -3px 0 6px; }
.ipy { font: 10px "DejaVu Sans Mono", monospace; letter-spacing: -1px; }
.arrow { display: block; flex: none; width: 10px; height: 6px; background: #555; clip-path: polygon(0 0, 100% 0, 50% 100%); }

.workspace { flex: 1; display: flex; min-height: 0; }
.docks { width: 260px; flex: none; display: flex; flex-direction: column; border-top: 1px solid #ccc; }
.dock-title { font-weight: 400; font-size: 14.3px; line-height: 20px; padding: 2px 0 0 5px; color: #2c2c2c; }
.dock-tools { display: flex; align-items: center; gap: 12.100px; height: 24px; margin-top: 9px; padding-left: 10px; }
.dock-tools svg { width: 20px; height: 20px; }
.dock-tools .eye { width: 22px; }
.layer-tools { gap: 11.800px; margin-top: 9px; }
.layer-tools svg + .arrow { margin: 0 0 0 -4px; }
.layer-tools .arrow + svg { margin-left: -1px; }
.tree { list-style: none; background: #fff; border-top: 1px solid #c4c4c4; border-bottom: 1px solid #c4c4c4; overflow: hidden; white-space: nowrap; color: #111; flex: none; }
.tree li { display: flex; align-items: center; height: 23.1px; padding-left: 10px; }
.tree li > svg { width: 20px; height: 20px; margin-right: 9px; }
.tree li > .tile { width: 18px; height: 18px; margin-right: 8px; }
.tw { width: 9px; height: 9px; margin-right: 12px; flex: none; }
.tw.closed { background: #5c5c5c; clip-path: polygon(15% 0, 70% 50%, 15% 100%); }
.tw.open { background: #5c5c5c; clip-path: polygon(0 20%, 100% 20%, 50% 75%); }
.tree.browser li > svg { margin-right: 8px; }
.db2 { width: 20px; height: 20px; margin-right: 8px; flex: none; overflow: hidden; border-radius: 3px; background: #6794c8; color: #e6effa; font-size: 8px; line-height: 20px; text-align: center; }
.browser { height: 296px; margin-top: 8px; }
.tree .child { padding-left: 59px; }
.hgrip { width: 21px; height: 2px; margin: 2px 0 0 181px; background: radial-gradient(circle at 1px 1px, #b9b9b9 .8px, transparent 1.2px) 0 0 / 4px 2px; }
.layers-title { padding-top: 6px; }
.layers { height: 275px; margin-top: 8px; }
.layers li:first-child { margin-top: 3px; height: 20px; margin-bottom: 1px; }
.layers .selected { background: #dcdcdc; font-weight: 700; color: #000; letter-spacing: .38px; }
.layers .selected u { text-underline-offset: 3px; text-decoration-thickness: 1px; text-decoration-skip-ink: none; }
.check { width: 18px; height: 18px; flex: none; background: #fff; border: 1px solid #b5b5b5; border-radius: 1px; }
.check.small { margin-right: 9px; }
.tree .legend-row { padding-left: 56px; letter-spacing: .15px; }
.legend-row .swatch { margin-right: 8px; }
.swatch { width: 20px; height: 20px; background: #000; }
.swatch.none { background: #fff; }
.locate { flex: 1; padding: 5px 0 0 5px; background: linear-gradient(#e6e6e6, #d8d8d8); }
.locate-box { height: 30px; display: flex; align-items: center; gap: 9px; padding-left: 10px; background: #fff; border: 1px solid #b0b0b0; border-radius: 3px; color: #7f7f7f; }
.locate-box svg { width: 17px; height: 17px; }

.map-side { flex: 1; display: flex; flex-direction: column; background: #fff; }
.canvas { flex: 1; border-top: 1px solid #c6c6c6; padding-top: 79px; }
.raster { width: 320px; height: 576px; margin-left: auto; }
#map-cells, #thumb-cells { shape-rendering: crispEdges; }
.status { height: 39px; flex: none; display: flex; align-items: center; justify-content: flex-end; background: linear-gradient(#ececec, #d8d8d8); border-top: 1px solid #c0c0c0; font-size: 14.5px; position: relative; padding: 1px 33px 0 0; }
.spin-only { width: 19px; height: 28px; display: flex; border: 1px solid #aaa; border-radius: 3px; background: #f0f0f0; margin-right: 9px; }
.render-label { margin: 0 20px 0 6px; font-size: 14.2px; }
.crs { width: 20px; height: 18px; margin-right: 3px; }
.msg { width: 22px; height: 20px; margin-left: 28px; }
.corner { position: absolute; right: 1px; bottom: 1px; width: 9px; height: 9px; background: radial-gradient(circle at 1px 1px, #aaa .8px, transparent 1.200px) 0 0 / 3px 3px; clip-path: polygon(100% 0, 100% 100%, 0 100%); }

/* dialog */
.dialog {
  position: absolute; left: 247px; top: -12px; width: 1048px; height: 972px;
  background: #ebebeb; box-shadow: 0 22px 60px rgba(0, 0, 0, .62), 0 0 1px rgba(0, 0, 0, .6);
}
.dialog-title { height: 28px; display: flex; align-items: center; gap: 10px; padding-left: 10px; background: linear-gradient(#e2e2e2, #cbcbcb); border-bottom: 1px solid #b2b2b2; color: #4d4d4d; }
.dialog-title i { width: 15.700px; height: 15.700px; border-radius: 50%; background: #8a898d; border: 1px solid #7b7a7e; }
.dialog-title i.mid { background: #d2d2d2; border-color: #bfbfbf; }
.dialog-title span { margin-left: 235px; letter-spacing: .21px; }
.dialog-body { display: flex; height: 944px; }
.sidebar { width: 193px; flex: none; background: #5c5c5c; color: #f0f0f0; }
.search { height: 30px; display: flex; align-items: center; background: #fff; border: 1px solid #7da7d6; padding-left: 10px; gap: 10px; }
.search svg { width: 17px; height: 17px; }
.caret { width: 1px; height: 20px; background: #111; }
.sidebar a { display: flex; align-items: center; height: 46.300px; padding: 0 0 0 6px; }
.sidebar .search + a { margin-top: 8px; }
.sidebar a svg { width: 32px; height: 32px; margin-right: 10px; }
.sidebar .active { background: #ebebeb; color: #000; padding-left: 9.500px; }
.split { width: 7px; flex: none; background: radial-gradient(circle at 1px 1px, #bbb .8px, transparent 1.200px) 2px 0 / 4px 4.300px repeat-y; height: 22px; margin-top: 457px; }
.panel { flex: 1; margin-left: -7px; background: linear-gradient(transparent 870px, #d2d2d2 944px); }
.head { display: flex; align-items: center; height: 24px; font-size: 16.400px; letter-spacing: .22px; font-weight: 700; color: #000; margin: 15px 0 2px 20px; }
.tri { width: 14px; height: 10px; margin-right: 11px; background: #3c3c3c; clip-path: polygon(0 0, 100% 0, 50% 100%); }
.tri.right { width: 10px; height: 14px; margin-right: 12px; clip-path: polygon(0 0, 100% 50%, 0 100%); margin-left: 0; }
.second { margin: 8px 0 1px 20px; padding-bottom: 1px; }
.third { margin: 9px 0 1px 20px; padding-bottom: 1px; }
.group { margin-left: 18px; width: 822px; background: #e8e8e8; border: 1px solid #d6d6d6; border-radius: 3px; }
.band { height: 312px; padding: 13px 18px 0 13px; }
.row { display: flex; align-items: center; height: 31px; white-space: nowrap; }
.row label, .row .z-in, .row .z-out, .row .z-over { letter-spacing: .06px; }
.inner { padding-left: 4px; }
.inner label { width: 118px; flex: none; margin-top: -1px; }
.r-type label { width: 103px; }
.combo { height: 31px; display: flex; align-items: center; justify-content: space-between; padding: 0 9px 0 6px; background: linear-gradient(#fdfdfd, #e7e7e7); border: 1px solid #bababa; border-bottom-color: #a9a9a9; border-radius: 3px; color: #111; }
.r-type .combo { width: 225px; }
.grow { flex: 1; }
.mt11 { margin-top: 11px; }
.mt8 { margin-top: 8px; }
.mt12 { margin-top: 12px; }
.minmax { margin-top: 8px; }
.field { flex: 1; height: 30px; margin-top: -1px; padding: 4px 0 0 3px; background: #fff; border: 1px solid #b3b3b3; border-radius: 3px; color: #111; }
.lbl-min { width: 36px; margin-top: -1px; }
.lbl-max { padding: 0 0 0 8px; width: 49px; margin-top: -1px; }
.two { line-height: 20px; }
.sub { margin: 34px 0 0 10px; }
.color { height: 181px; padding: 14px 15px 0 13px; }
.color label { width: 124px; flex: none; margin-top: -1px; }
.color .combo { padding-bottom: 1px; }
.blend { width: 290px; }
.reset { margin-left: auto; width: 79px; height: 29px; margin-top: -1px; display: flex; align-items: center; gap: 5px; padding-left: 5px; font-size: 12.500px; letter-spacing: .3px; border: 1px solid #b4b4b4; border-radius: 3px; background: linear-gradient(#fdfdfd, #e9e9e9); }
.reset svg { width: 16px; height: 16px; }
.r-bright { height: 29px; margin-top: 8px; }
.r-sat { margin-top: 9px; }
.r-hue { height: 36px; margin-top: 7px; }
.r-hue label { margin-top: 0; }
.slider { display: flex; align-items: center; flex: none; margin-top: -2px; }
.half { width: 195px; margin: -2px 9px 0 1px; }
.fill { height: 7px; background: #5b9ff0; border: 1px solid #3c77bd; border-right: 0; border-radius: 2px 0 0 2px; flex: none; }
.half .fill { width: 90px; }
.full { width: 265px; margin-right: 9px; }
.full .fill { width: 248px; }
.knob { width: 17px; height: 17px; flex: none; background: linear-gradient(#fff, #f1f1f1); border: 1px solid #aaa; border-radius: 3px; }
.rest { flex: 1; height: 7px; background: #d2d2d2; border: 1px solid #b0b0b0; border-left: 0; border-radius: 0 2px 2px 0; }
.spin { height: 29px; display: flex; flex: none; border: 1px solid #b0b0b0; border-radius: 3px; background: #fff; overflow: hidden; color: #111; }
.spin em { flex: 1; padding: 3.500px 0 0 6px; }
.spin .spin-arrows { width: 19px; border-left: 1px solid #b5b5b5; }
.spin-arrows { display: flex; flex-direction: column; align-items: center; justify-content: center; gap: 5px; width: 100%; background: linear-gradient(#fcfcfc, #eaeaea); }
.up, .down { width: 10px; height: 5px; background: #555; clip-path: polygon(50% 0, 100% 100%, 0 100%); }
.down { clip-path: polygon(0 0, 100% 0, 50% 100%); }
.w74 { width: 74px; } .w79 { width: 79px; } .w77 { width: 77px; }
.off em { color: #bdbdbd; padding-left: 6px; }
.off .up { background: #999; }
.vline { width: 2px; height: 31px; margin-left: 7px; background: #d2d2d2; border-right: 1px solid #f5f5f5; }
.color .mid-label { width: 85px; margin-left: 10px; }
.color .gs { width: 85px; }
.gray { width: 286px; }
.colorize { width: 80px; margin-left: 6px; color: #4e4e4e; }
.swbtn { width: 112px; height: 36px; padding: 6px 5px; border: 1px solid #c4c4c4; border-radius: 3px; background: #f1f1f1; }
.swbtn i { display: block; height: 21px; border-radius: 3px; background: #e5dfdf; }
.swdrop { width: 16px; height: 36px; display: flex; align-items: center; justify-content: center; border: 1px solid #c4c4c4; border-radius: 3px; background: #f1f1f1; margin-left: 1px; }
.strength { width: 77px; margin-left: 8px; letter-spacing: .15px; }
.resample { height: 60px; padding: 13px 0 0 13px; }
.z-in { width: 95px; } .z-out { width: 33.500px; margin-left: 8px; } .z-over { width: 115px; margin-left: 8px; }
.near { width: 181px; }
.previews { display: flex; gap: 9px; margin: 9px 0 0 144px; }
.preview h3 { height: 25px; line-height: 24px; font-size: 16.300px; letter-spacing: .15px; color: #000; padding-left: 1px; }
.preview { width: 184px; }
.frame { height: 183px; padding: 13px; border: 1px solid #d4d4d4; border-radius: 3px; background: #e8e8e8; }
.thumb { width: 154px; height: 154px; }
.blank { width: 155px; height: 154px; border: 1px solid #222; }
.buttons { display: flex; gap: 8px; margin: 19px 4px 0 5px; }
.btn { width: 102.700px; height: 31px; display: flex; align-items: center; justify-content: center; background: linear-gradient(#fdfdfd, #ededed); border: 1px solid #b3b3b3; border-bottom-color: #a0a0a0; border-radius: 3px; }
.style { gap: 25px; padding-left: 16px; }
.style .arrow { width: 8px; height: 5px; }
.cancel { margin-left: auto; }
.ok { border-color: #6aa3e0; box-shadow: 0 0 0 1px #a9c9ee; background: linear-gradient(#fff, #e6eef8); }
```
